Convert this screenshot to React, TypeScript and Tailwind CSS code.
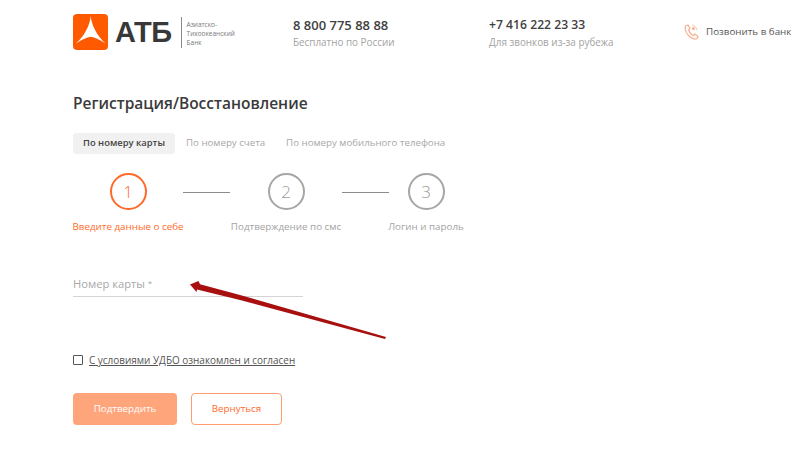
import React from "react";

const font = { fontFamily: '"Open Sans", "Noto Sans", sans-serif' };

function Step({ n, label, active, w }: { n: string; label: string; active?: boolean; w: string }) {
  return (
    <div className={`flex flex-col items-center ${w}`}>
      <div className={`flex h-[37px] w-[37px] items-center justify-center rounded-full border-2 text-[17px] font-light ${active ? "border-[#ff6a2b] text-[#ff6a2b]" : "border-[#a6a6a6] text-[#9a9a9a]"}`}>
        {n}
      </div>
      <div className={`mt-[10px] whitespace-nowrap text-[9.8px] leading-[14px] ${active ? "font-medium text-[#ff6a2b]" : "text-[#a3a3a3]"}`}>{label}</div>
    </div>
  );
}

function Line() {
  return <div className="mt-[19px] h-px w-[47px] shrink-0 bg-[#8c8c8c]" />;
}

export default function App() {
  return (
    <div className="relative h-[455px] w-[800px] overflow-hidden bg-white" style={font}>
      <header className="flex h-[64px] items-start pl-[73px] pt-[14px]">
        <div className="flex w-[220px] items-start">
          <svg width="35" height="36" viewBox="0 0 35 36" className="mr-px shrink-0">
            <rect width="35" height="36" rx="4" fill="#ff5a00" />
            <path d="M17.7 2 C18.5 11 24 22 32.5 29.5 C27 26 22 23 17.7 22.7 C13.4 23 8.5 26 3 29.5 C11.5 22 17 11 17.7 2Z" fill="#fff" />
          </svg>
          <div className="ml-[6px] text-[29px] font-bold leading-[37px] tracking-[-0.5px] text-[#383838]" style={{ fontFamily: '"Liberation Sans", sans-serif' }}>АТБ</div>
          <div className="ml-[9px] mt-[3px] h-[31px] w-px bg-[#8a8a8a]" />
          <div className="ml-[5px] mt-[6px] text-[6.5px] leading-[9px] text-[#777]">
            Азиатско-<br />Тихоокеанский<br />Банк
          </div>
        </div>
        <div className="w-[196px] pt-[2px]">
          <div className="text-[13px] font-semibold leading-[18px] text-[#3f3f3f]">8 800 775 88 88</div>
          <div className="mt-[1px] text-[9.9px] leading-[14px] text-[#a3a3a3]">Бесплатно по России</div>
        </div>
        <div className="w-[195px] pt-[2px]">
          <div className="text-[12.2px] font-semibold leading-[18px] text-[#3f3f3f]">+7 416 222 23 33</div>
          <div className="mt-[1px] text-[9.9px] leading-[14px] text-[#a3a3a3]">Для звонков из-за рубежа</div>
        </div>
        <div className="flex items-center pt-[10px]">
          <svg width="15" height="16" viewBox="0 0 15 16" fill="none" stroke="#f9b08f" strokeWidth="1.2" className="shrink-0">
            <path d="M1.5 2 L4 1 L6 4.5 L4.5 6 C5.5 8.5 7 10.5 9.5 11.5 L11 10 L14 12.5 L13 14.5 C11.5 15.5 8.5 15 5.5 12.5 C2.5 10 0.5 5.5 1.5 2Z" />
            <circle cx="9.5" cy="4.5" r="1.5" fill="#f9b08f" stroke="none" />
            <path d="M8 1 C10.5 1.5 12.5 3.5 13 6" strokeWidth="0.8" />
          </svg>
          <div className="ml-[7px] whitespace-nowrap text-[9.8px] text-[#555]">Позвонить в банк</div>
        </div>
      </header>

      <main className="pl-[73px]">
        <h1 className="mt-[28px] text-[15.5px] font-semibold leading-[22px] text-[#3a3a3a]">Регистрация/Восстановление</h1>
        <div className="mt-[19px] flex items-center text-[9.7px] text-[#a8a8a8]">
          <div className="flex h-[21px] w-[102px] items-center justify-center rounded-[3px] bg-[#f1f1f1] text-[9.4px] font-semibold text-[#444]">По номеру карты</div>
          <div className="ml-[11px]">По номеру счета</div>
          <div className="ml-[21px]">По номеру мобильного телефона</div>
        </div>
        <div className="mt-[19px] flex">
          <Step n="1" label="Введите данные о себе" active w="w-[110px]" />
          <Line />
          <Step n="2" label="Подтверждение по смс" w="w-[112px]" />
          <Line />
          <Step n="3" label="Логин и пароль" w="w-[74px]" />
        </div>
        <div className="mt-[41px] w-[230px] border-b-[1.5px] border-[#d4d4d4] pb-[2px] text-[11.2px] leading-[18px] text-[#a8a8a8]">
          Номер карты <span className="relative -top-[2px] text-[8px]">*</span>
        </div>
        <label className="mt-[56px] flex items-center">
          <span className="h-[10px] w-[10px] rounded-[1px] border-[1.5px] border-[#555]" />
          <span className="ml-[6px] whitespace-nowrap text-[9.95px] leading-[14px] text-[#555] underline">С условиями УДБО ознакомлен и согласен</span>
        </label>
        <div className="mt-[26px] flex gap-[14px] text-[9.8px]">
          <button className="h-[32px] w-[104px] rounded-[4px] bg-[#ffa57c] text-white">Подтвердить</button>
          <button className="h-[32px] w-[91px] rounded-[4px] border border-[#ff9d70] font-medium text-[#ff6a2b]">Вернуться</button>
        </div>
      </main>

      <svg className="pointer-events-none absolute left-0 top-0" width="800" height="455">
        <path d="M190 284.5 L198.5 281 L200 284.3 L240 295 L386 337 L385 339 L240 300 L197 289.5 L196.5 292Z" fill="#a80f0f" />
      </svg>
    </div>
  );
}
